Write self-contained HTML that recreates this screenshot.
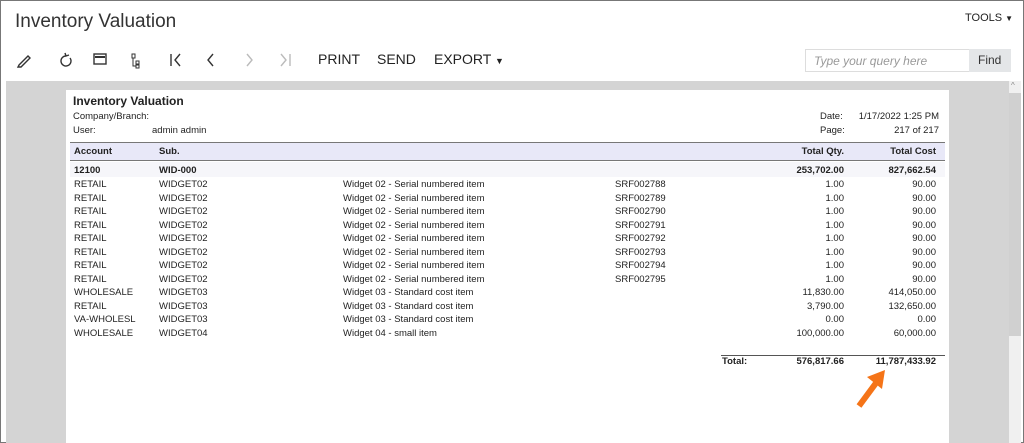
<!DOCTYPE html>
<html><head><style>
*{margin:0;padding:0;box-sizing:border-box}
body{width:1024px;height:443px;overflow:hidden;background:#fff;font-family:"Liberation Sans",sans-serif;position:relative;border:1px solid #777}
.a{position:absolute;white-space:nowrap}
.tb{font-size:14px;color:#222;top:50px}
.r{font-size:9.5px;color:#222}
.b{font-weight:bold}
.rt{text-align:right}
</style></head><body>
<div class="a" style="left:14px;top:10px;font-size:19px;color:#333">Inventory Valuation</div>
<div class="a" style="left:964px;top:11px;font-size:11px;color:#222">TOOLS <span style="font-size:8px">▼</span></div>
<svg class="a" style="left:14px;top:49px" width="300" height="20" fill="none" stroke="#333" stroke-width="1.4">
<path d="M4 15 L13 6 L15 8 L6 17 L3 17 Z"/>
<path d="M51 6 A5 5 0 1 0 55 8 M50 3 L51 6 L54 5"/>
<rect x="79" y="4" width="12" height="10"/><path d="M80 7h10" stroke-width="2"/>
<path d="M117 4h3v4h-3zM118 8v8h3M121 11h3v3h-3zM121 15h3v3h-3z" stroke-width="1"/>
<path d="M156 4v12M165 4l-5 6 5 6"/>
<path d="M198 4l-5 6 5 6"/>
<path d="M232 4l5 6-5 6" stroke="#bbb"/>
<path d="M266 4l5 6-5 6M275 4v12" stroke="#bbb"/>
</svg>
<div class="a tb" style="left:317px">PRINT</div>
<div class="a tb" style="left:376px">SEND</div>
<div class="a tb" style="left:433px">EXPORT <span style="font-size:9px">▼</span></div>
<div class="a" style="left:804px;top:48px;width:165px;height:23px;border:1px solid #ddd;font-size:12px;font-style:italic;color:#999;padding:4px 8px">Type your query here</div>
<div class="a" style="left:968px;top:48px;width:42px;height:23px;background:#e4e6e8;font-size:12px;color:#333;padding:4px 9px">Find</div>
<div class="a" style="left:5px;top:80px;width:1003px;height:362px;background:#d4d4d4"></div>
<div class="a" style="left:1008px;top:80px;width:12px;height:362px;background:#f0f0f0"></div>
<div class="a" style="left:1008px;top:92px;width:12px;height:243px;background:#d0d0d0"></div>
<div class="a" style="left:1010px;top:80px;font-size:8px;color:#888">^</div>
<div class="a" style="left:65px;top:89px;width:883px;height:353px;background:#fff"></div>
<div class="a r b" style="left:72px;top:93px;font-size:12px">Inventory Valuation</div>
<div class="a r" style="left:72px;top:110px">Company/Branch:</div>
<div class="a r" style="left:72px;top:124px">User:</div>
<div class="a r" style="left:151px;top:124px">admin admin</div>
<div class="a r" style="left:819px;top:110px">Date:</div>
<div class="a r" style="left:819px;top:124px">Page:</div>
<div class="a r rt" style="left:840px;top:110px;width:98px">1/17/2022 1:25 PM</div>
<div class="a r rt" style="left:840px;top:124px;width:98px">217 of 217</div>
<div class="a" style="left:69px;top:141px;width:875px;height:19px;background:#e8e8f8;border-top:1px solid #777;border-bottom:1px solid #777"></div>
<div class="a r b" style="left:73px;top:145px">Account</div>
<div class="a r b" style="left:158px;top:145px">Sub.</div>
<div class="a r b rt" style="left:740px;top:145px;width:103px">Total Qty.</div>
<div class="a r b rt" style="left:835px;top:145px;width:100px">Total Cost</div>
<div class="a" style="left:69px;top:161px;width:875px;height:15px;background:#f6f6fa"></div>
<div class="a r b" style="left:73px;top:164px">12100</div>
<div class="a r b" style="left:158px;top:164px">WID-000</div>
<div class="a r b rt" style="left:740px;top:164px;width:103px">253,702.00</div>
<div class="a r b rt" style="left:835px;top:164px;width:100px">827,662.54</div>
<div id="rows"></div>
<div class="a" style="left:720px;top:354px;width:224px;border-top:1px solid #555"></div>
<div class="a r b" style="left:721px;top:355px">Total:</div>
<div class="a r b rt" style="left:740px;top:355px;width:103px">576,817.66</div>
<div class="a r b rt" style="left:835px;top:355px;width:100px">11,787,433.92</div>
<svg class="a" style="left:850px;top:364px" width="40" height="45"><path d="M8 41 L25 18" stroke="#f57418" stroke-width="6"/><path d="M34 5 L16 12 L31 24 Z" fill="#f57418"/></svg>
<script>
var d=[["RETAIL","WIDGET02","Widget 02 - Serial numbered item","SRF002788","1.00","90.00"],
["RETAIL","WIDGET02","Widget 02 - Serial numbered item","SRF002789","1.00","90.00"],
["RETAIL","WIDGET02","Widget 02 - Serial numbered item","SRF002790","1.00","90.00"],
["RETAIL","WIDGET02","Widget 02 - Serial numbered item","SRF002791","1.00","90.00"],
["RETAIL","WIDGET02","Widget 02 - Serial numbered item","SRF002792","1.00","90.00"],
["RETAIL","WIDGET02","Widget 02 - Serial numbered item","SRF002793","1.00","90.00"],
["RETAIL","WIDGET02","Widget 02 - Serial numbered item","SRF002794","1.00","90.00"],
["RETAIL","WIDGET02","Widget 02 - Serial numbered item","SRF002795","1.00","90.00"],
["WHOLESALE","WIDGET03","Widget 03 - Standard cost item","","11,830.00","414,050.00"],
["RETAIL","WIDGET03","Widget 03 - Standard cost item","","3,790.00","132,650.00"],
["VA-WHOLESL","WIDGET03","Widget 03 - Standard cost item","","0.00","0.00"],
["WHOLESALE","WIDGET04","Widget 04 - small item","","100,000.00","60,000.00"]];
var h="";d.forEach(function(r,i){var t=178+i*13.5;
h+='<div class="a r" style="left:73px;top:'+t+'px">'+r[0]+'</div><div class="a r" style="left:158px;top:'+t+'px">'+r[1]+'</div><div class="a r" style="left:342px;top:'+t+'px">'+r[2]+'</div><div class="a r" style="left:614px;top:'+t+'px">'+r[3]+'</div><div class="a r rt" style="left:740px;top:'+t+'px;width:103px">'+r[4]+'</div><div class="a r rt" style="left:835px;top:'+t+'px;width:100px">'+r[5]+'</div>';});
document.getElementById("rows").innerHTML=h;
</script>
</body></html>
